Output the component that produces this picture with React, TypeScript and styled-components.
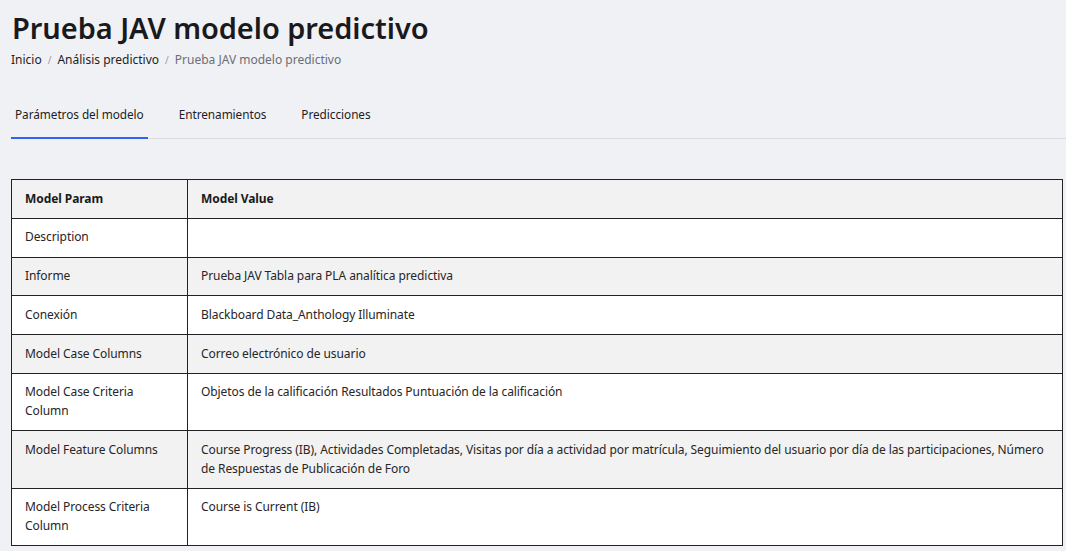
import React from "react";
import styled, { createGlobalStyle } from "styled-components";

const Global = createGlobalStyle`
  html, body { margin: 0; padding: 0; background: #f0f1f5; }
  body { font-family: "Noto Sans", "Open Sans", sans-serif; color: #1d1d1f; }
`;

const Page = styled.div`
  padding: 0 3px 0 11px;
`;

const Title = styled.h1`
  margin: 0;
  padding-top: 10px;
  padding-left: 1px;
  font-size: 29px;
  line-height: 36px;
  font-weight: 600;
  color: #1a1a1c;
  letter-spacing: -0.05px;
`;

const Crumbs = styled.nav`
  display: flex;
  align-items: center;
  margin-top: 5px;
  font-size: 12px;
  line-height: 18px;
`;

const Crumb = styled.span<{ $current?: boolean }>`
  color: ${(p) => (p.$current ? "#6b6e75" : "#1d1d1f")};
`;

const Sep = styled.span`
  color: #9a9ca3;
  font-size: 10px;
  margin: 0 6px;
`;

const Tabs = styled.div`
  display: flex;
  margin-top: 36px;
  margin-right: -3px;
  border-bottom: 1px solid #dcdde3;
`;

const Tab = styled.div<{ $active?: boolean }>`
  padding: 0 4px 14px 4px;
  margin-right: 27px;
  margin-bottom: -1px;
  font-size: 11.8px;
  letter-spacing: -0.05px;
  line-height: 18px;
  color: #1d1d1f;
  border-bottom: 2px solid ${(p) => (p.$active ? "#2f62f5" : "transparent")};
`;

const Table = styled.table`
  margin-top: 40px;
  width: 100%;
  border-collapse: collapse;
  font-size: 12px;
  line-height: 18.75px;
  letter-spacing: -0.08px;
  color: #262628;
`;

const Row = styled.tr<{ $shade?: boolean }>`
  background: ${(p) => (p.$shade ? "#f2f2f2" : "#ffffff")};
`;

const Cell = styled.td<{ $head?: boolean }>`
  border: 1px solid #222226;
  padding: 9.5px 13px 9.5px 13px;
  vertical-align: top;
  font-weight: ${(p) => (p.$head ? 700 : 400)};
  color: ${(p) => (p.$head ? "#1a1a1c" : "#262628")};
  &:first-child { width: 149px; }
`;

const rows: [string, string][] = [
  ["Description", ""],
  ["Informe", "Prueba JAV Tabla para PLA analítica predictiva"],
  ["Conexión", "Blackboard Data_Anthology Illuminate"],
  ["Model Case Columns", "Correo electrónico de usuario"],
  ["Model Case Criteria Column", "Objetos de la calificación Resultados Puntuación de la calificación"],
  [
    "Model Feature Columns",
    "Course Progress (IB), Actividades Completadas, Visitas por día a actividad por matrícula, Seguimiento del usuario por día de las participaciones, Número de Respuestas de Publicación de Foro",
  ],
  ["Model Process Criteria Column", "Course is Current (IB)"],
];

export default function App() {
  return (
    <Page>
      <Global />
      <Title>Prueba JAV modelo predictivo</Title>
      <Crumbs>
        <Crumb>Inicio</Crumb>
        <Sep>/</Sep>
        <Crumb>Análisis predictivo</Crumb>
        <Sep>/</Sep>
        <Crumb $current>Prueba JAV modelo predictivo</Crumb>
      </Crumbs>
      <Tabs>
        <Tab $active>Parámetros del modelo</Tab>
        <Tab>Entrenamientos</Tab>
        <Tab>Predicciones</Tab>
      </Tabs>
      <Table>
        <tbody>
          <Row $shade>
            <Cell $head>Model Param</Cell>
            <Cell $head>Model Value</Cell>
          </Row>
          {rows.map(([k, v], i) => (
            <Row key={k} $shade={i % 2 === 1}>
              <Cell>{k}</Cell>
              <Cell>{v}</Cell>
            </Row>
          ))}
        </tbody>
      </Table>
    </Page>
  );
}
